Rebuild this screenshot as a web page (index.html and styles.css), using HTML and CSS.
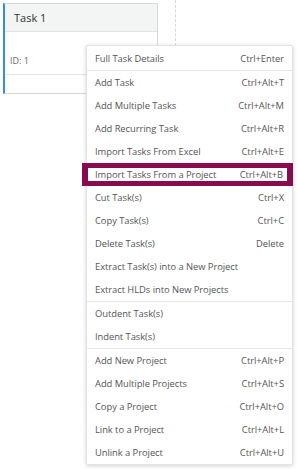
FILE: index.html
```html
<!doctype html>
<html lang="en">
    <head>
        <meta charset="UTF-8" />
        <meta name="viewport" content="width=device-width, initial-scale=1.0" />
        <title>Task Board</title>
        <link rel="stylesheet" href="styles.css">
    </head>
    <body>
        <div class="board">
            <div class="column">
                <div class="card">
                    <div class="card-header">Task 1</div>
                    <div class="card-id">ID: 1</div>
                    <div class="card-footer"></div>
                </div>
            </div>
            <div class="divider"></div>
        </div>

        <ul class="context-menu">
            <li class="item"><span>Full Task Details</span><span class="key">Ctrl+Enter</span></li>
            <li class="sep"></li>
            <li class="item"><span>Add Task</span><span class="key">Ctrl+Alt+T</span></li>
            <li class="item"><span>Add Multiple Tasks</span><span class="key">Ctrl+Alt+M</span></li>
            <li class="item"><span>Add Recurring Task</span><span class="key">Ctrl+Alt+R</span></li>
            <li class="item"><span>Import Tasks From Excel</span><span class="key">Ctrl+Alt+E</span></li>
            <li class="item active"><span>Import Tasks From a Project</span><span class="key">Ctrl+Alt+B</span></li>
            <li class="item"><span>Cut Task(s)</span><span class="key">Ctrl+X</span></li>
            <li class="item"><span>Copy Task(s)</span><span class="key">Ctrl+C</span></li>
            <li class="item"><span>Delete Task(s)</span><span class="key">Delete</span></li>
            <li class="item"><span>Extract Task(s) into a New Project</span></li>
            <li class="item"><span>Extract HLDs into New Projects</span></li>
            <li class="sep"></li>
            <li class="item"><span>Outdent Task(s)</span></li>
            <li class="item"><span>Indent Task(s)</span></li>
            <li class="sep"></li>
            <li class="item"><span>Add New Project</span><span class="key">Ctrl+Alt+P</span></li>
            <li class="item"><span>Add Multiple Projects</span><span class="key">Ctrl+Alt+S</span></li>
            <li class="item"><span>Copy a Project</span><span class="key">Ctrl+Alt+O</span></li>
            <li class="item"><span>Link to a Project</span><span class="key">Ctrl+Alt+L</span></li>
            <li class="item"><span>Unlink a Project</span><span class="key">Ctrl+Alt+U</span></li>
        </ul>
    </body>
</html>
```

FILE: styles.css
```css
body {
    font-family: "Open Sans", "Noto Sans", sans-serif;
    margin: 0;
    padding: 0;
    background-color: #ffffff;
    color: #555;
    width: 298px;
    height: 469px;
    overflow: hidden;
    position: relative;
}
.board {
    display: flex;
    padding: 3px 0 0 3px;
}
.column {
    width: 155px;
}
.card {
    border: 1px solid #d6d9da;
    border-left: 2px solid #2f8fd8;
    background-color: #fff;
}
.card-header {
    background-color: #f3f4f4;
    border-bottom: 1px solid #e1e3e4;
    height: 27px;
    line-height: 27px;
    padding-left: 9px;
    font-size: 11px;
    color: #333;
}
.card-id {
    height: 42px;
    line-height: 57px;
    padding-left: 5px;
    font-size: 9px;
    color: #666;
    border-bottom: 1px solid #e1e3e4;
}
.card-footer {
    height: 18px;
}
.divider {
    margin-left: 17px;
    margin-top: -3px;
    height: 46px;
    border-left: 1px dashed #d8d8d8;
}
.context-menu {
    position: absolute;
    left: 86px;
    top: 45px;
    width: 207px;
    margin: 0;
    padding: 1px 0 0;
    list-style: none;
    background-color: #fff;
    border: 1px solid #e3e3e3;
    border-radius: 2px;
    box-shadow: 0 1px 4px rgba(0, 0, 0, 0.18);
    font-size: 9.4px;
    letter-spacing: -0.05px;
    color: #555;
    box-sizing: border-box;
}
.item {
    display: flex;
    justify-content: space-between;
    align-items: center;
    height: 23px;
    padding: 0 8px 0 8px;
}
.sep {
    border-top: 1px solid #e6e6e6;
}
.active {
    margin: 0 -1px 0 -5px;
    padding: 0 4px 0 7px;
    border: 5px solid #880b4f;
    border-width: 5px 6px;
    height: 13px;
    background-color: #fff;
}
```
